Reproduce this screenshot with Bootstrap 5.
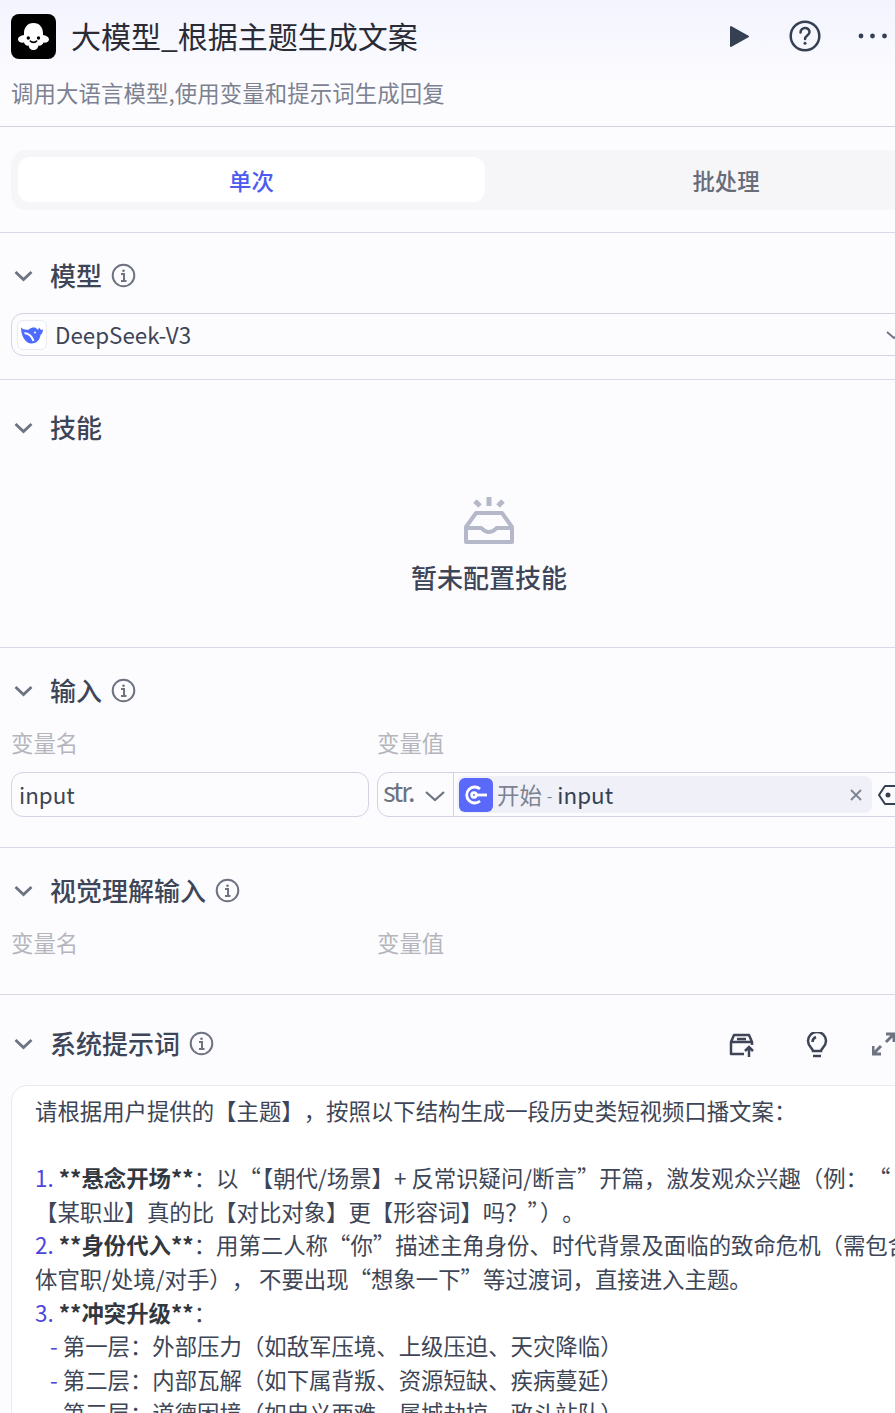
<!DOCTYPE html>
<html lang="zh">
<head>
  <meta charset="UTF-8"/>
  <meta name="viewport" content="width=device-width, initial-scale=1.0"/>
  <title>大模型_根据主题生成文案</title>
  <link href="https://cdn.jsdelivr.net/npm/bootstrap@5.3.0/dist/css/bootstrap.min.css" rel="stylesheet">
  <style>
    html, body {
      height: 100%;
      overflow: hidden;
    }
    body {
      background: #fcfcff;
      color: #354052;
      font-family: "Noto Sans CJK SC", "Noto Sans", sans-serif;
      text-spacing-trim: space-all;
      width: 895px;
    }
    .panel-head {
      height: 127px;
      padding: 14px 0 0 11px;
      background: linear-gradient(#f3f4fe, #fcfcff 70%);
      border-bottom: 1px solid #d0d3e2;
    }
    .app-logo {
      width: 45px;
      height: 45px;
      background: #000;
      border-radius: 8px;
    }
    .app-title {
      font-size: 30px;
      line-height: 43px;
      color: #2b2b36;
      margin-left: 15px;
    }
    .head-play { left: 729px; top: 25px; }
    .head-help { left: 789px; top: 20px; }
    .head-more { left: 857px; top: 32px; }
    .app-desc {
      font-size: 22.4px;
      line-height: 30px;
      letter-spacing: .1px;
      color: #7c8291;
      margin-top: 18px;
    }
    .tab-wrap {
      height: 106px;
      padding: 23px 0 0 11px;
      border-bottom: 1px solid #d8dae6;
      overflow: hidden;
    }
    .tab-track {
      width: 950px;
      height: 60px;
      padding: 7px;
      background: #f6f6f9;
      border-radius: 15px;
    }
    .tab-item {
      width: 482px;
      height: 45px;
      line-height: 46px;
      text-align: center;
      font-size: 22.4px;
      font-weight: 500;
      color: #686c78;
      flex-shrink: 0;
    }
    .tab-on {
      width: 467px;
      background: #fff;
      border-radius: 12px;
      color: #4e5bef;
    }
    .sec-rule {
      border-bottom: 1px solid #d8dae6;
      overflow: hidden;
    }
    .sec-model { height: 147px; padding-top: 27px; }
    .sec-skill { height: 268px; padding-top: 32px; }
    .sec-input { height: 200px; padding-top: 27px; }
    .sec-vision { height: 147px; padding-top: 27px; }
    .sec-prompt { padding-top: 33px; overflow: hidden; }
    .sec-title {
      font-size: 26px;
      line-height: 30px;
      font-weight: 500;
      color: #3d4556;
    }
    .chev {
      width: 26px;
      margin-right: 13px;
      margin-top: 2px;
      flex-shrink: 0;
    }
    .sec-info { margin-left: 9px; margin-top: 1px; }
    .sec-row {
      padding-left: 11px;
      height: 30px;
    }
    .model-box {
      margin: 23px 0 0 11px;
      width: 930px;
      height: 43px;
      border: 1px solid #d0d3e2;
      border-radius: 12px;
      padding-left: 5px;
      font-size: 22.4px;
      color: #3d4556;
    }
    .ds-logo {
      width: 30px;
      height: 30px;
      border: 1px solid #e9eaf2;
      border-radius: 6px;
      background: #fff;
      margin-right: 8px;
    }
    .model-chev { margin-left: auto; margin-right: 38px; }
    .empty-wrap { width: 978px; margin-top: 54px; }
    .empty-label {
      font-size: 26px;
      line-height: 32px;
      font-weight: 500;
      color: #3d4556;
      margin-top: 15px;
    }
    .var-heads { padding-left: 11px; margin-top: 22px; }
    .var-label {
      font-size: 22.4px;
      line-height: 30px;
      color: #b4b6bc;
    }
    .var-row { padding-left: 11px; margin-top: 15px; }
    .col-name { width: 366px; flex-shrink: 0; }
    .input-name {
      width: 358px;
      height: 45px;
      border: 1px solid #d0d3e2;
      border-radius: 12px;
      padding-left: 7px;
      font-size: 22.4px;
      line-height: 43px;
      color: #3d4556;
    }
    .input-value {
      width: 600px;
      height: 45px;
      border: 1px solid #d0d3e2;
      border-radius: 12px;
      flex-shrink: 0;
    }
    .type-pick {
      width: 76px;
      height: 43px;
      border-right: 1px solid #d0d3e2;
      padding-left: 5px;
      font-size: 27px;
      letter-spacing: -2px;
      color: #6d7380;
      flex-shrink: 0;
    }
    .type-text { margin-bottom: 6px; }
    .type-chev { margin-left: 10px; margin-top: 3px; }
    .var-chip {
      width: 415px;
      height: 37px;
      margin-left: 3px;
      background: #eff0f8;
      border-radius: 8px;
      padding-left: 2px;
      font-size: 22.4px;
      white-space: nowrap;
    }
    .chip-icon {
      width: 34px;
      height: 34px;
      background: #5b69fb;
      border-radius: 6px;
      margin-right: 4px;
    }
    .chip-src { color: #7c8291; }
    .chip-dot { color: #7c8291; margin: 0 5px; font-size: 16px; }
    .chip-close { margin-left: auto; margin-right: 10px; }
    .var-pick { margin-left: 5px; flex-shrink: 0; }
    .tool-upload { left: 728px; top: 37px; }
    .tool-bulb { left: 805px; top: 37px; }
    .tool-expand { left: 872px; top: 37px; }
    .prompt-box {
      margin: 27px 0 0 11px;
      width: 960px;
      height: 400px;
      background: #fff;
      border: 1px solid #e9eaf0;
      border-radius: 16px;
      padding: 8px 0 0 23px;
      font-size: 22.4px;
      line-height: 33.6px;
      color: #3d4556;
      white-space: nowrap;
    }
    .prompt-box b { font-weight: 700; color: #33383f; }
    .prompt-box i { font-style: normal; color: #4e46dc; }
    .prompt-box p { margin: 0; }
    .sub-item { padding-left: 15px; }
    .sub-item em { font-style: normal; color: #4e46dc; margin-right: 5px; }
    .quote-tight { letter-spacing: -10px; }
  </style>
</head>
<body>
  <div class="panel-head position-relative">
    <div class="d-flex">
      <div class="app-logo d-flex align-items-center justify-content-center">
        <svg width="31" height="27" viewBox="0 0 31 27"><path d="M15.500 0C9 0 6 5 6 10v2c-3 .5-6 2-6 4.500S3 20 6 19.500c.5 2.500 3 3.500 4.500 3 1 3.500 2.500 4.500 5 4.500s4-1 5-4.500c1.500.5 4.500-.5 5-3 2.500.5 5.500-.5 5.500-3S28 12.500 25 12v-2C25 5 22 0 15.500 0z" fill="#fff"/><circle cx="10.300" cy="15" r="1.700" fill="#000"/><circle cx="20.500" cy="15" r="1.700" fill="#000"/><path d="M12.300 18c1.500 1.800 4.900 1.800 6.400 0" fill="none" stroke="#000" stroke-width="1.600" stroke-linecap="round"/></svg>
      </div>
      <div class="app-title">大模型_根据主题生成文案</div>
    </div>
    <svg class="position-absolute head-play" width="20" height="23" viewBox="0 0 20 23"><path d="M2 2l17 9.500L2 21z" fill="#354052" stroke="#354052" stroke-width="2" stroke-linejoin="round"/></svg>
    <svg class="position-absolute head-help" width="32" height="32" viewBox="0 0 32 32" fill="none" stroke="#354052" stroke-width="2.500"><circle cx="16" cy="16" r="14.300"/><path d="M11.500 12.500c0-6 9-6 9-.5 0 3.500-4.500 3.300-4.500 7" stroke-linecap="round"/><circle cx="16" cy="23.300" r="1.500" fill="#354052" stroke="none"/></svg>
    <svg class="position-absolute head-more" width="32" height="8" viewBox="0 0 32 8" fill="#354052"><circle cx="4" cy="4" r="2.400"/><circle cx="15.500" cy="4" r="2.400"/><circle cx="27.500" cy="4" r="2.400"/></svg>
    <div class="app-desc">调用大语言模型,使用变量和提示词生成回复</div>
  </div>

  <div class="tab-wrap">
    <div class="tab-track d-flex">
      <div class="tab-item tab-on">单次</div>
      <div class="tab-item">批处理</div>
    </div>
  </div>

  <div class="sec-rule sec-model">
    <div class="sec-row d-flex align-items-center">
      <svg class="chev" height="12" viewBox="0 0 26 12"><path d="M4.500 2l8 7.500 8-7.500" fill="none" stroke="#6d7380" stroke-width="2.800"/></svg>
      <span class="sec-title">模型</span>
      <svg class="sec-info" width="25" height="25" viewBox="0 0 25 25" fill="none" stroke="#6d7380" stroke-width="2"><circle cx="12.500" cy="12.500" r="10.800"/><circle cx="12.500" cy="7.800" r="1.300" fill="#6d7380" stroke="none"/><path d="M10 11h3v7M10 18h5.500"/></svg>
    </div>
    <div class="model-box d-flex align-items-center">
      <div class="ds-logo d-flex align-items-center justify-content-center">
        <svg width="24" height="18" viewBox="0 0 24 18"><path d="M1 1.500C3 3.500 6 4 9 3.500 11 1.500 14 1 16 2l2 2 1-2.500L21 4l2-.5c0 2.500-1 4.500-2.500 5.500-.5 5-4.500 8.500-9 8.500C5.500 17.500 1 10 1 1.500z" fill="#4d6bfe"/><path d="M4.500 7c3.500.5 7.500 3 9 8" fill="none" stroke="#fff" stroke-width="2"/><circle cx="15" cy="6.500" r="1" fill="#fff"/></svg>
      </div>
      DeepSeek-V3
      <svg class="model-chev" width="16" height="10" viewBox="0 0 16 10"><path d="M1 2l7 6 7-6" fill="none" stroke="#6d7380" stroke-width="1.800"/></svg>
    </div>
  </div>

  <div class="sec-rule sec-skill">
    <div class="sec-row d-flex align-items-center">
      <svg class="chev" height="12" viewBox="0 0 26 12"><path d="M4.500 2l8 7.500 8-7.500" fill="none" stroke="#6d7380" stroke-width="2.800"/></svg>
      <span class="sec-title">技能</span>
    </div>
    <div class="empty-wrap d-flex flex-column align-items-center">
      <svg width="52" height="50" viewBox="0 0 52 50" fill="none" stroke="#b4b8c8" stroke-width="4"><path d="M3 46V31L13 17h26l10 14v15z" stroke-linejoin="round"/><path d="M3 32h15c2 0 2 4 8 4s6-4 8-4h15"/><path d="M26 1v9M12 5l5 5M40 5l-5 5" stroke-width="5"/></svg>
      <div class="empty-label">暂未配置技能</div>
    </div>
  </div>

  <div class="sec-rule sec-input">
    <div class="sec-row d-flex align-items-center">
      <svg class="chev" height="12" viewBox="0 0 26 12"><path d="M4.500 2l8 7.500 8-7.500" fill="none" stroke="#6d7380" stroke-width="2.800"/></svg>
      <span class="sec-title">输入</span>
      <svg class="sec-info" width="25" height="25" viewBox="0 0 25 25" fill="none" stroke="#6d7380" stroke-width="2"><circle cx="12.500" cy="12.500" r="10.800"/><circle cx="12.500" cy="7.800" r="1.300" fill="#6d7380" stroke="none"/><path d="M10 11h3v7M10 18h5.500"/></svg>
    </div>
    <div class="var-heads d-flex">
      <div class="col-name var-label">变量名</div>
      <div class="var-label">变量值</div>
    </div>
    <div class="var-row d-flex">
      <div class="col-name"><div class="input-name">input</div></div>
      <div class="input-value d-flex align-items-center">
        <div class="type-pick d-flex align-items-center"><span class="type-text">str.</span>
          <svg class="type-chev" width="22" height="12" viewBox="0 0 22 12"><path d="M2 2l9 8 9-8" fill="none" stroke="#6d7380" stroke-width="2.200"/></svg>
        </div>
        <div class="var-chip d-flex align-items-center">
          <div class="chip-icon d-flex align-items-center justify-content-center">
            <svg width="26" height="24" viewBox="0 0 26 24" fill="none" stroke="#fff" stroke-width="2.800"><path d="M17 6A8 8 0 1 0 17 18"/><circle cx="11" cy="12" r="2.300"/><path d="M13 12h11"/></svg>
          </div>
          <span class="chip-src">开始</span><span class="chip-dot">-</span><span>input</span>
          <svg class="chip-close" width="12" height="12" viewBox="0 0 12 12"><path d="M1 1l10 10M11 1L1 11" stroke="#7c8291" stroke-width="1.800"/></svg>
        </div>
        <svg class="var-pick" width="28" height="24" viewBox="0 0 28 24" fill="none" stroke="#354052" stroke-width="2"><path d="M8 3h18v18H8l-6-9z" stroke-linejoin="round"/><circle cx="11" cy="12" r="1.500" fill="#354052"/></svg>
      </div>
    </div>
  </div>

  <div class="sec-rule sec-vision">
    <div class="sec-row d-flex align-items-center">
      <svg class="chev" height="12" viewBox="0 0 26 12"><path d="M4.500 2l8 7.500 8-7.500" fill="none" stroke="#6d7380" stroke-width="2.800"/></svg>
      <span class="sec-title">视觉理解输入</span>
      <svg class="sec-info" width="25" height="25" viewBox="0 0 25 25" fill="none" stroke="#6d7380" stroke-width="2"><circle cx="12.500" cy="12.500" r="10.800"/><circle cx="12.500" cy="7.800" r="1.300" fill="#6d7380" stroke="none"/><path d="M10 11h3v7M10 18h5.500"/></svg>
    </div>
    <div class="var-heads d-flex">
      <div class="col-name var-label">变量名</div>
      <div class="var-label">变量值</div>
    </div>
  </div>

  <div class="sec-prompt position-relative">
    <div class="sec-row d-flex align-items-center">
      <svg class="chev" height="12" viewBox="0 0 26 12"><path d="M4.500 2l8 7.500 8-7.500" fill="none" stroke="#6d7380" stroke-width="2.800"/></svg>
      <span class="sec-title">系统提示词</span>
      <svg class="sec-info" width="25" height="25" viewBox="0 0 25 25" fill="none" stroke="#6d7380" stroke-width="2"><circle cx="12.500" cy="12.500" r="10.800"/><circle cx="12.500" cy="7.800" r="1.300" fill="#6d7380" stroke="none"/><path d="M10 11h3v7M10 18h5.500"/></svg>
    </div>
    <svg class="position-absolute tool-upload" width="28" height="26" viewBox="0 0 28 26" fill="none" stroke="#3d4556" stroke-width="2.500"><path d="M16 22H3V10l3-7h15l3 7v3M3 10h21M9 7h9" stroke-linejoin="round"/><path d="M21 25v-9M17 19l4-4 4 4"/></svg>
    <svg class="position-absolute tool-bulb" width="24" height="26" viewBox="0 0 24 26" fill="none" stroke="#3d4556" stroke-width="2.500"><path d="M8 19c0-3-5-4-5-10a9 9 0 0 1 18 0c0 6-5 7-5 10z"/><path d="M7.500 10c0-3 1-4 3.500-5M8 24h8"/></svg>
    <svg class="position-absolute tool-expand" width="23" height="24" viewBox="0 0 23 24" fill="none" stroke="#6d7380" stroke-width="3"><path d="M14 2h8v8M22 2l-8 8M1 14v8h8M1 22l8-8"/></svg>
    <div class="prompt-box">
      <p>请根据用户提供的【主题】，按照以下结构生成一段历史类短视频口播文案：</p>
      <p>&nbsp;</p>
      <p><i>1.</i> <b>**悬念开场**</b>：以<span class="quote-tight">“</span>【朝代/场景】+ 反常识疑问/断言”开篇，激发观众兴趣（例：“</p>
      <p>【某职业】真的比【对比对象】更【形容词】吗？<span class="quote-tight">”</span>）。</p>
      <p><i>2.</i> <b>**身份代入**</b>：用第二人称“你”描述主角身份、时代背景及面临的致命危机（需包含</p>
      <p>体官职/处境/对手）， 不要出现“想象一下”等过渡词，直接进入主题。</p>
      <p><i>3.</i> <b>**冲突升级**</b>：</p>
      <p class="sub-item"><em>-</em>第一层：外部压力（如敌军压境、上级压迫、天灾降临）</p>
      <p class="sub-item"><em>-</em>第二层：内部瓦解（如下属背叛、资源短缺、疾病蔓延）</p>
      <p class="sub-item"><em>-</em>第三层：道德困境（如忠义两难、属城劫掠、政斗站队）</p>
    </div>
  </div>

  <script src="https://cdn.jsdelivr.net/npm/bootstrap@5.3.0/dist/js/bootstrap.bundle.min.js"></script>
</body>
</html>
